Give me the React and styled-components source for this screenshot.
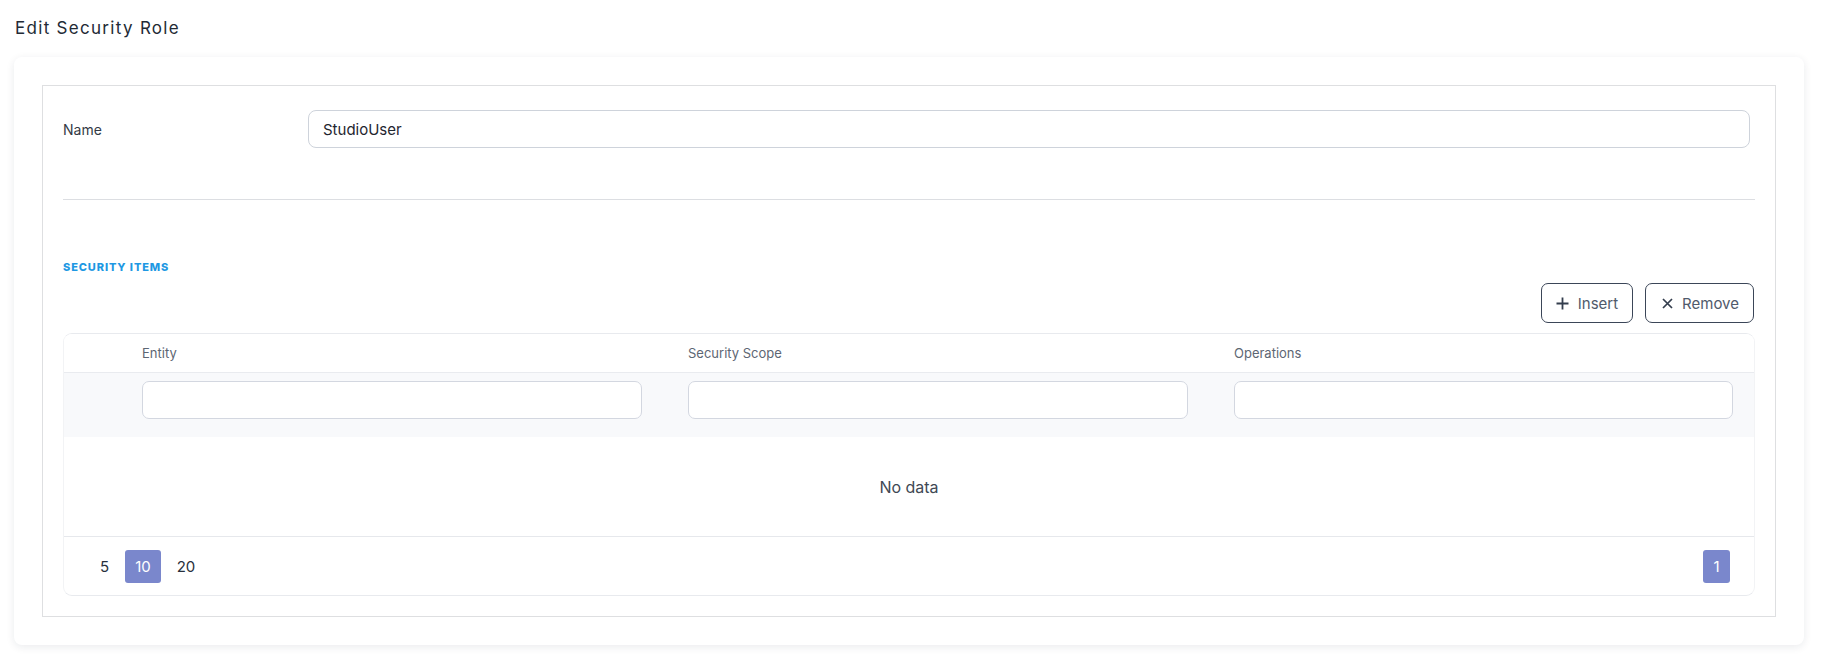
import React from "react";
import styled, { createGlobalStyle } from "styled-components";

const GlobalStyle = createGlobalStyle`
  html, body {
    margin: 0;
    padding: 0;
    background: #ffffff;
    font-family: Inter, "Noto Sans", "Liberation Sans", sans-serif;
    color: #2d3440;
  }
  * {
    box-sizing: border-box;
  }
`;

const Page = styled.div`
  padding: 16px 25px 20px 14px;
`;

const Title = styled.h1`
  margin: 0 0 17px 1px;
  font-size: 17px;
  line-height: 24px;
  font-weight: 400;
  letter-spacing: 1.3px;
  color: #222a35;
`;

const Card = styled.div`
  background: #fff;
  border-radius: 8px;
  box-shadow: 0 2px 8px rgba(20, 30, 50, 0.09);
  padding: 28px;
`;

const FormBox = styled.div`
  border: 1px solid #dedfe1;
  padding: 24px 20px 20px;
`;

const NameRow = styled.div`
  display: grid;
  grid-template-columns: 245px 1fr;
  align-items: center;
  margin-right: 5px;
`;

const Label = styled.label`
  font-size: 14px;
  color: #333a45;
`;

const TextInput = styled.input`
  height: 38px;
  width: 100%;
  border: 1px solid #ced3db;
  border-radius: 8px;
  padding: 0 14px;
  font-family: inherit;
  font-size: 15px;
  color: #1f2630;
  background: #fff;
  outline: none;
`;

const Divider = styled.hr`
  margin: 51px 0 0;
  border: none;
  border-top: 1px solid #dcdee2;
`;

const SectionTitle = styled.div`
  margin-top: 59px;
  font-size: 11px;
  line-height: 16px;
  font-weight: 800;
  letter-spacing: 0.9px;
  color: #1e98e3;
`;

const Toolbar = styled.div`
  display: flex;
  justify-content: flex-end;
  gap: 12px;
  margin-top: 8px;
  padding-right: 1px;
`;

const ToolButton = styled.button`
  display: flex;
  align-items: center;
  gap: 8px;
  height: 40px;
  padding: 0 14px;
  border: 1px solid #3b4658;
  border-radius: 7px;
  background: #fff;
  font-family: inherit;
  font-size: 15px;
  color: #505a6b;
  cursor: pointer;
`;

const IconBox = styled.span`
  display: flex;
  align-items: center;
  justify-content: center;
  width: 14px;
  height: 14px;
`;

const Table = styled.div`
  margin-top: 10px;
  border: 1px solid #e8eaee;
  border-left-color: #f2f3f5;
  border-right-color: #f2f3f5;
  border-radius: 9px;
  overflow: hidden;
`;

const GridRow = styled.div`
  display: grid;
  grid-template-columns: 32px 500px 500px 499px;
  column-gap: 46px;
  align-items: ${(p) => (p.$filter ? "start" : "center")};
  height: ${(p) => (p.$filter ? "64px" : "39px")};
  padding: ${(p) => (p.$filter ? "8px 0 0" : "0")};
  background: ${(p) => (p.$filter ? "#f8f9fb" : "#fff")};
  border-bottom: ${(p) => (p.$filter ? "none" : "1px solid #e9ebef")};
`;

const HeaderCell = styled.div`
  font-size: 13px;
  color: #5d6673;
`;

const FilterInput = styled(TextInput)`
  border-color: #d3d7e0;
  border-radius: 7px;
`;

const EmptyRow = styled.div`
  height: 100px;
  display: flex;
  align-items: center;
  justify-content: center;
  font-size: 16px;
  color: #404854;
  border-bottom: 1px solid #e6e8ec;
`;

const Pager = styled.div`
  height: 58px;
  display: flex;
  align-items: center;
  justify-content: space-between;
  padding: 0 24px 0 26px;
`;

const PageGroup = styled.div`
  display: flex;
  align-items: center;
  gap: 6px;
`;

const PageButton = styled.button`
  height: 33px;
  min-width: 27px;
  padding: 0 10px;
  border: none;
  border-radius: 3px;
  font-family: inherit;
  font-size: 15px;
  background: ${(p) => (p.$active ? "#7a87cc" : "transparent")};
  color: ${(p) => (p.$active ? "#ffffff" : "#28303c")};
  cursor: pointer;
`;

const PlusIcon = () => (
  <IconBox>
    <svg width="13" height="13" viewBox="0 0 13 13" fill="none">
      <path d="M6.5 0.5v12M0.5 6.5h12" stroke="#333d4d" strokeWidth="1.8" />
    </svg>
  </IconBox>
);

const CrossIcon = () => (
  <IconBox>
    <svg width="11" height="11" viewBox="0 0 11 11" fill="none">
      <path d="M1 1l9 9M10 1L1 10" stroke="#333d4d" strokeWidth="1.7" />
    </svg>
  </IconBox>
);

const columns = ["Entity", "Security Scope", "Operations"];

export default function App() {
  return (
    <>
      <GlobalStyle />
      <Page>
        <Title>Edit Security Role</Title>
        <Card>
          <FormBox>
            <NameRow>
              <Label>Name</Label>
              <TextInput defaultValue="StudioUser" />
            </NameRow>
            <Divider />
            <SectionTitle>SECURITY ITEMS</SectionTitle>
            <Toolbar>
              <ToolButton>
                <PlusIcon />
                Insert
              </ToolButton>
              <ToolButton>
                <CrossIcon />
                Remove
              </ToolButton>
            </Toolbar>
            <Table>
              <GridRow>
                <div />
                {columns.map((c) => (
                  <HeaderCell key={c}>{c}</HeaderCell>
                ))}
              </GridRow>
              <GridRow $filter>
                <div />
                {columns.map((c) => (
                  <FilterInput key={c} aria-label={c} />
                ))}
              </GridRow>
              <EmptyRow>No data</EmptyRow>
              <Pager>
                <PageGroup>
                  <PageButton>5</PageButton>
                  <PageButton $active>10</PageButton>
                  <PageButton>20</PageButton>
                </PageGroup>
                <PageButton $active>1</PageButton>
              </Pager>
            </Table>
          </FormBox>
        </Card>
      </Page>
    </>
  );
}
